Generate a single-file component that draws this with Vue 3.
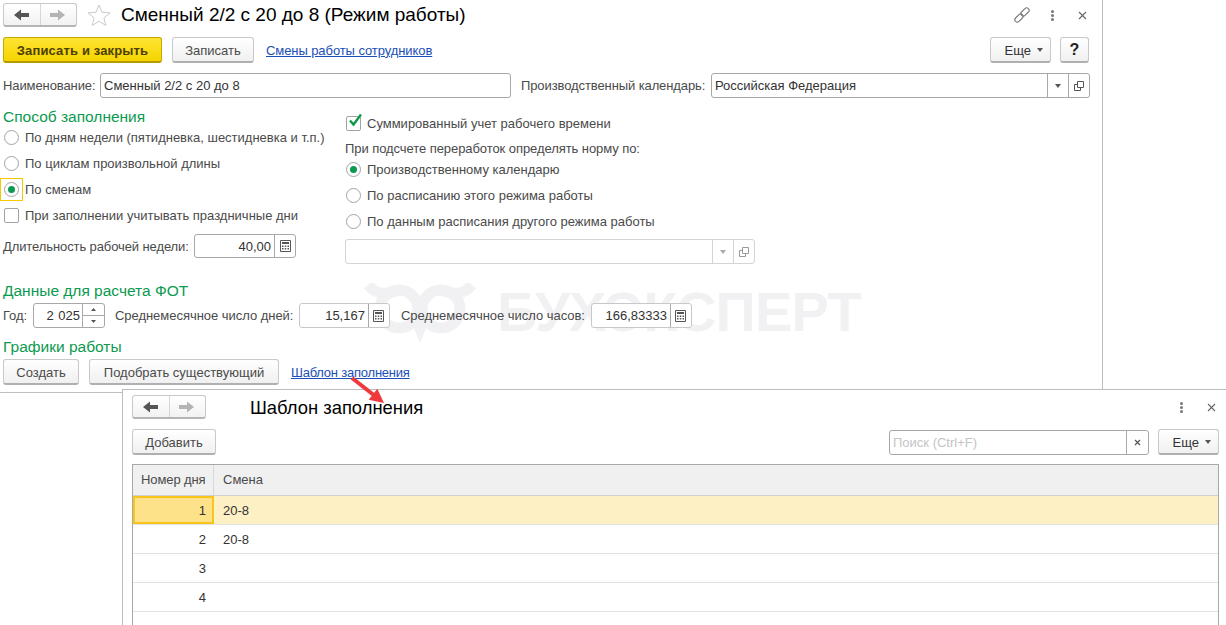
<template>
  <div class="page">
    <div class="wm" aria-hidden="true">
      <svg class="wm-logo" width="112" height="60" viewBox="0 0 112 60">
        <g fill="none" stroke="#f1f1f3" stroke-width="11">
          <circle cx="35" cy="26" r="19" />
          <circle cx="77" cy="26" r="19" />
          <path d="M4 2 C12 12 22 12 35 7 M108 2 C100 12 90 12 77 7" />
        </g>
        <path d="M47 38 L56 60 L65 38 Z" fill="#f1f1f3" />
      </svg>
      <span class="wm-text">БУХЭКСПЕРТ</span>
    </div>

    <div class="main">
      <div class="title-row">
        <div class="nav">
          <span class="nav-cell"><svg width="16" height="12" viewBox="0 0 16 12"><path d="M0 6 L7 0.5 V4 H15 V8 H7 V11.5 Z" fill="#555" /></svg></span>
          <span class="nav-cell"><svg width="16" height="12" viewBox="0 0 16 12"><path d="M15 6 L8 0.5 V4 H0 V8 H8 V11.5 Z" fill="#b4b4b4" /></svg></span>
        </div>
        <svg class="star" width="24" height="22" viewBox="0 0 24 22"><path d="M12 1 L15 8.3 L23 8.9 L16.9 13.9 L18.8 21.4 L12 17.3 L5.2 21.4 L7.1 13.9 L1 8.9 L9 8.3 Z" fill="#fff" stroke="#c9c9c9" /></svg>
        <h1 class="title">Сменный 2/2 с 20 до 8 (Режим работы)</h1>
        <div class="win-icons">
          <svg class="link-ic" width="16" height="16" viewBox="0 0 16 16"><g fill="none" stroke="#777" stroke-width="1.1"><rect x="-4.8" y="-2.4" width="9.6" height="4.8" rx="2.4" transform="translate(5 11) rotate(-45)" /><rect x="-4.8" y="-2.4" width="9.6" height="4.8" rx="2.4" transform="translate(11 5) rotate(-45)" /></g></svg>
          <span class="dots"><i></i><i></i><i></i></span>
          <svg width="9" height="9" viewBox="0 0 9 9"><path d="M1 1 L8 8 M8 1 L1 8" stroke="#666" stroke-width="1.1" /></svg>
        </div>
      </div>

      <div class="toolbar">
        <button class="btn primary">Записать и закрыть</button>
        <button class="btn write">Записать</button>
        <a class="link">Смены работы сотрудников</a>
        <button class="btn more">Еще<i class="caret"></i></button>
        <button class="btn help">?</button>
      </div>

      <div class="name-row">
        <span class="lbl name-lbl">Наименование:</span>
        <div class="field name-field"><span class="val">Сменный 2/2 с 20 до 8</span></div>
        <span class="lbl cal-lbl">Производственный календарь:</span>
        <div class="field cal-field">
          <span class="val grow">Российская Федерация</span>
          <span class="addon"><i class="caret"></i></span>
          <span class="addon"><svg width="10" height="10" viewBox="0 0 10 10"><path d="M3.5 .5 H9.5 V6.5 H3.5 Z M3.5 3.5 H.5 V9.5 H6.5 V6.5" fill="none" stroke="#555" /></svg></span>
        </div>
      </div>

      <div class="cols">
        <div class="col-left">
          <h2 class="group first">Способ заполнения</h2>
          <label v-for="(r, i) in leftRadios" :key="r" class="opt">
            <span class="radio" :class="{ on: i === 2, focused: i === 2 }"></span>{{ r }}
          </label>
          <label class="opt"><span class="check"></span>При заполнении учитывать праздничные дни</label>
          <div class="week-row">
            <span class="lbl week-lbl">Длительность рабочей недели:</span>
            <div class="field week-field">
              <span class="val grow right">40,00</span>
              <span class="addon"><svg class="calc" width="11" height="12" viewBox="0 0 11 12"><use href="#calc-ic" /></svg></span>
            </div>
          </div>
        </div>
        <div class="col-right">
          <label class="opt"><span class="check on"><svg width="16" height="15" viewBox="0 0 16 15"><path d="M3 7.5 L6.5 11.5 L14 1.5" fill="none" stroke="#0d9a4a" stroke-width="2.4" /></svg></span>Суммированный учет рабочего времени</label>
          <div class="norm-lbl">При подсчете переработок определять норму по:</div>
          <label v-for="(r, i) in rightRadios" :key="r" class="opt">
            <span class="radio" :class="{ on: i === 0 }"></span>{{ r }}
          </label>
          <div class="field off-field">
            <span class="grow"></span>
            <span class="addon"><i class="caret light"></i></span>
            <span class="addon"><svg width="10" height="10" viewBox="0 0 10 10"><path d="M3.5 .5 H9.5 V6.5 H3.5 Z M3.5 3.5 H.5 V9.5 H6.5 V6.5" fill="none" stroke="#999" /></svg></span>
          </div>
        </div>
      </div>

      <h2 class="group fot">Данные для расчета ФОТ</h2>
      <div class="fot-row">
        <span class="lbl">Год:</span>
        <div class="field year-field">
          <span class="val grow right year-val">2 025</span>
          <span class="spin">
            <span><svg width="5" height="3" viewBox="0 0 5 3"><path d="M2.5 0 L5 3 H0 Z" fill="#555" /></svg></span>
            <span><svg width="5" height="3" viewBox="0 0 5 3"><path d="M0 0 H5 L2.5 3 Z" fill="#555" /></svg></span>
          </span>
        </div>
        <span class="lbl days-lbl">Среднемесячное число дней:</span>
        <div class="field days-field light-border">
          <span class="val grow right">15,167</span>
          <span class="addon"><svg class="calc" width="11" height="12" viewBox="0 0 11 12"><use href="#calc-ic" /></svg></span>
        </div>
        <span class="lbl hours-lbl">Среднемесячное число часов:</span>
        <div class="field hours-field light-border">
          <span class="val grow right">166,83333</span>
          <span class="addon"><svg class="calc" width="11" height="12" viewBox="0 0 11 12"><use href="#calc-ic" /></svg></span>
        </div>
      </div>

      <h2 class="group sched">Графики работы</h2>
      <div class="sched-row">
        <button class="btn create">Создать</button>
        <button class="btn pick">Подобрать существующий</button>
        <a class="link tpl">Шаблон заполнения</a>
      </div>
    </div>

    <div class="dialog">
      <div class="dlg-head">
        <div class="nav">
          <span class="nav-cell"><svg width="16" height="12" viewBox="0 0 16 12"><path d="M0 6 L7 0.5 V4 H15 V8 H7 V11.5 Z" fill="#555" /></svg></span>
          <span class="nav-cell"><svg width="16" height="12" viewBox="0 0 16 12"><path d="M15 6 L8 0.5 V4 H0 V8 H8 V11.5 Z" fill="#b4b4b4" /></svg></span>
        </div>
        <h1 class="dlg-title">Шаблон заполнения</h1>
        <div class="win-icons dlg-icons">
          <span class="dots"><i></i><i></i><i></i></span>
          <svg width="9" height="9" viewBox="0 0 9 9"><path d="M1 1 L8 8 M8 1 L1 8" stroke="#666" stroke-width="1.1" /></svg>
        </div>
      </div>
      <div class="dlg-tools">
        <button class="btn add">Добавить</button>
        <div class="field search">
          <span class="val grow placeholder">Поиск (Ctrl+F)</span>
          <span class="addon"><svg width="7" height="7" viewBox="0 0 7 7"><path d="M1 1 L6 6 M6 1 L1 6" stroke="#555" stroke-width="1.2" /></svg></span>
        </div>
        <button class="btn more dlg-more">Еще<i class="caret"></i></button>
      </div>
      <div class="grid">
        <div class="grid-head">
          <div class="c-num">Номер дня</div>
          <div class="c-shift">Смена</div>
        </div>
        <div v-for="(row, i) in rows" :key="i" class="grid-row" :class="{ current: i === 0 }">
          <div class="c-num right">{{ row.n }}</div>
          <div class="c-shift">{{ row.shift }}</div>
        </div>
      </div>
    </div>

    <svg class="arrow" width="44" height="36" viewBox="0 0 44 36">
      <path d="M2 3 L25 21" stroke="#f0393c" stroke-width="4" />
      <path d="M34 28 L18.7 24.8 L27.3 13.8 Z" fill="#f0393c" />
    </svg>

    <svg width="0" height="0" class="defs">
      <symbol id="calc-ic" viewBox="0 0 11 12">
        <path d="M.5 .5 H10.5 V11.5 H.5 Z" fill="none" stroke="#555" />
        <path d="M2 2 H9 V4 H2 Z" fill="#555" />
        <path d="M2 5.5 H3.5 V7 H2 Z M4.75 5.5 H6.25 V7 H4.75 Z M7.5 5.5 H9 V7 H7.5 Z M2 8 H3.5 V9.5 H2 Z M4.75 8 H6.25 V9.5 H4.75 Z M7.5 8 H9 V9.5 H7.5 Z" fill="#555" />
      </symbol>
    </svg>
  </div>
</template>

<script setup>
const leftRadios = [
  'По дням недели (пятидневка, шестидневка и т.п.)',
  'По циклам произвольной длины',
  'По сменам'
]
const rightRadios = [
  'Производственному календарю',
  'По расписанию этого режима работы',
  'По данным расписания другого режима работы'
]
const rows = [
  { n: 1, shift: '20-8' },
  { n: 2, shift: '20-8' },
  { n: 3, shift: '' },
  { n: 4, shift: '' },
  { n: '', shift: '' }
]
</script>

<style>
html, body { margin: 0; background: #fff; }
</style>

<style scoped>
.page {
  position: relative; width: 1226px; height: 625px; overflow: hidden; background: #fff;
  font-family: "Liberation Sans", Arial, sans-serif; font-size: 13px; color: #4a4a4a;
}
.defs { position: absolute; }

.wm { position: absolute; left: 364px; top: 282px; display: flex; align-items: flex-start; gap: 21px; }
.wm-logo { margin-top: 1px; }
.wm-text { font-size: 56px; line-height: 60px; font-weight: 700; color: #f1f1f3; letter-spacing: -.8px; }

.main {
  position: relative; box-sizing: border-box; width: 1103px; height: 393px;
  padding: 3px 12px 0 3px; border-right: 1px solid #bdbdbd; border-bottom: 1px solid #bdbdbd;
}

.title-row { display: flex; align-items: center; height: 24px; }
.nav {
  display: flex; flex: none; box-sizing: border-box; width: 74px; height: 24px; border-radius: 3px;
  border: 1px solid #c9c9c9; border-bottom: 2px solid #b5b5b5;
  background: linear-gradient(#fff, #f2f2f2);
}
.nav-cell { flex: 1; display: flex; align-items: center; justify-content: center; }
.nav-cell + .nav-cell { border-left: 1px solid #d6d6d6; }
.star { margin-left: 10px; }
.title { margin: 0 0 0 10px; font-size: 19px; font-weight: 400; color: #000; white-space: nowrap; }
.win-icons { margin-left: auto; display: flex; align-items: center; gap: 24px; padding-right: 3px; }
.link-ic { margin-right: -3px; }
.dots { display: flex; flex-direction: column; gap: 1px; }
.dots i { display: block; width: 3px; height: 3px; border-radius: 50%; background: #777; }

.toolbar { display: flex; align-items: center; height: 26px; margin-top: 10px; }
.btn {
  box-sizing: border-box; height: 26px; padding: 1px 0 0; border-radius: 3px; font: inherit; color: #4a4a4a;
  border: 1px solid #c9c9c9; border-bottom: 2px solid #b0b0b0;
  background: linear-gradient(#fff, #f0f0f0); white-space: nowrap;
}
.primary {
  width: 159px; font-weight: 700; color: #4d4000; border-color: #c9a800; border-bottom-color: #b69a00;
  background: linear-gradient(#ffe433, #f5d400); letter-spacing: .15px;
}
.write { width: 82px; margin-left: 10px; }
.link { color: #1a4fb5; text-decoration: underline; letter-spacing: -.08px; white-space: nowrap; }
.toolbar .link { margin-left: 12px; }
.more { display: flex; align-items: center; justify-content: flex-end; gap: 6px; padding-right: 7px; color: #333; }
.toolbar .more { width: 61px; margin-left: auto; }
.help { width: 29px; margin: 0 1px 0 9px; font-size: 16px; font-weight: 700; color: #222; }
.caret { display: block; width: 0; height: 0; border: 3.5px solid transparent; border-top: 4px solid #555; border-bottom: 0; }
.caret.light { border-top-color: #aaa; }

.lbl { white-space: nowrap; letter-spacing: -.1px; }
.field {
  box-sizing: border-box; display: flex; align-items: stretch; height: 25px; background: #fff;
  border: 1px solid #a8a8a8; border-radius: 3px; color: #333;
}
.val { padding: 0 3px; line-height: 23px; white-space: nowrap; }
.grow { flex: 1; min-width: 0; }
.right { text-align: right; }
.addon {
  display: flex; align-items: center; justify-content: center; width: 20px;
  border-left: 1px solid #a8a8a8;
}

.name-row { display: flex; align-items: center; height: 25px; margin-top: 10px; }
.name-lbl { width: 91px; }
.name-field { width: 411px; margin-left: 6px; }
.cal-lbl { width: 184px; margin-left: 10px; }
.cal-field { width: 379px; margin-left: 6px; }

.cols { display: flex; }
.col-left { width: 342px; flex: none; }
.col-right { flex: none; padding-top: 12px; }
.group { margin: 0; font-size: 15.5px; line-height: 14px; font-weight: 400; color: #0b9a50; white-space: nowrap; }
.first { margin-top: 12px; }

.opt { display: flex; align-items: center; height: 26px; white-space: nowrap; }
.radio {
  position: relative; box-sizing: border-box; width: 15px; height: 15px; margin: 0 6px 0 1px; flex: none;
  border: 1px solid #a3a3a3; border-radius: 50%; background: #fff;
}
.radio.on::after {
  content: ""; position: absolute; left: 3px; top: 3px; width: 7px; height: 7px;
  border-radius: 50%; background: #0b9a50;
}
.radio.focused::before {
  content: ""; position: absolute; left: -5px; top: -5px; width: 21px; height: 21px;
  border: 1px solid #f5c800;
}
.check {
  position: relative; box-sizing: border-box; width: 15px; height: 15px; margin: 0 6px 0 1px; flex: none;
  border: 1px solid #a3a3a3; border-radius: 2px; background: #fff;
}
.check svg { position: absolute; left: 0; top: -4px; }

.week-row { display: flex; align-items: center; margin-top: 6px; }
.week-lbl { width: 185px; }
.week-field { width: 102px; margin-left: 6px; height: 24px; }
.norm-lbl { height: 17px; line-height: 20px; margin-top: 3px; white-space: nowrap; letter-spacing: -.07px; }
.off-field { width: 410px; margin-top: 5px; border-color: #d4d4d4; }
.off-field .addon { border-left-color: #d4d4d4; }

.fot { margin-top: 19px; line-height: 16px; }
.fot-row { display: flex; align-items: center; height: 25px; margin-top: 4px; }
.year-field { width: 72px; margin-left: 6px; }
.year-val { padding-right: 2px; word-spacing: 1px; }
.spin { display: flex; flex-direction: column; width: 21px; border-left: 1px solid #a8a8a8; }
.spin span { flex: 1; display: flex; align-items: center; justify-content: center; }
.spin span + span { border-top: 1px solid #a8a8a8; }
.days-lbl { width: 178px; margin-left: 10px; letter-spacing: -.03px; }
.days-field { width: 91px; margin-left: 6px; }
.hours-lbl { width: 184px; margin-left: 11px; letter-spacing: -.03px; }
.hours-field { width: 101px; margin-left: 6px; }
.light-border { border-color: #c8c8c8; }

.sched { margin-top: 11px; line-height: 16px; }
.sched-row { display: flex; align-items: center; height: 26px; margin-top: 4px; }
.create { width: 76px; }
.pick { width: 190px; margin-left: 10px; }
.tpl { margin-left: 12px; letter-spacing: -.22px; }

.dialog {
  position: absolute; left: 122px; top: 389px; right: 0; bottom: 0; box-sizing: border-box;
  padding: 5px 7px 0 9px; background: #fff;
  border-top: 1px solid #bdbdbd; border-left: 1px solid #bdbdbd;
}
.dlg-head { display: flex; align-items: center; height: 24px; }
.dlg-title { margin: 0 0 0 44px; padding-top: 2px; font-size: 18.4px; font-weight: 400; color: #000; white-space: nowrap; }
.dlg-icons { padding-right: 3px; }
.dlg-tools { display: flex; align-items: center; height: 26px; margin-top: 10px; }
.add { width: 84px; }
.search { width: 260px; margin-left: auto; border-color: #a8a8a8; }
.search .addon { width: 21px; }
.placeholder { color: #c4c4c4; }
.dlg-more { width: 61px; margin-left: 9px; }

.grid { margin-top: 9px; border: 1px solid #a8a8a8; border-bottom: 0; }
.grid-head {
  display: flex; height: 30px; line-height: 30px; background: #f0f0f0; border-bottom: 1px solid #d0d0d0;
}
.c-num { box-sizing: border-box; width: 81px; flex: none; padding: 0 8px; white-space: nowrap; }
.c-shift { padding: 0 9px; flex: 1; }
.grid-head .c-num { border-right: 1px solid #d8d8d8; letter-spacing: -.1px; }
.grid-row {
  display: flex; height: 28px; line-height: 30px; border-bottom: 1px solid #e2e2e2; color: #333;
}
.grid-row .c-num { text-align: right; }
.grid-row.current { background: #fdf0c4; }
.current .c-num { background: #fde28a; border: 2px solid #f7c51c; line-height: 26px; padding: 0 6px; }

.arrow { position: absolute; left: 350px; top: 375px; }
</style>
